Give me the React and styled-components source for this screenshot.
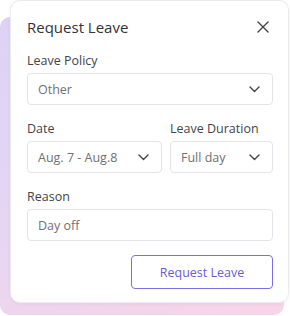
import styled, { createGlobalStyle } from "styled-components";

const GlobalStyle = createGlobalStyle`
  html, body {
    margin: 0;
    padding: 0;
    background: #ffffff;
  }
  body {
    font-family: "Open Sans", "Liberation Sans", sans-serif;
  }
  * {
    box-sizing: border-box;
  }
`;

const Stage = styled.div`
  display: grid;
  width: 290px;
  height: 316px;
`;

const Backdrop = styled.div`
  grid-area: 1 / 1;
  margin: 17px 6px 1px 0;
  border-radius: 10px;
  background: linear-gradient(160deg, #ddd2f6 0%, #e6d6f3 55%, #f8d5e6 100%);
`;

const Card = styled.div`
  grid-area: 1 / 1;
  margin: 0 1px 13px 10px;
  display: flex;
  flex-direction: column;
  padding: 16px 15px 0 16px;
  background: #ffffff;
  border: 1px solid #ececf0;
  border-radius: 10px;
  box-shadow: 0 1px 4px rgba(40, 30, 80, 0.05);
`;

const Header = styled.div`
  display: flex;
  align-items: center;
  justify-content: space-between;
  height: 20px;
  margin-bottom: 16px;
`;

const Title = styled.h2`
  margin: 0;
  font-size: 15px;
  font-weight: 500;
  color: #333338;
`;

const CloseButton = styled.button`
  display: flex;
  align-items: center;
  justify-content: center;
  width: 16px;
  height: 16px;
  margin-right: 2px;
  padding: 0;
  border: 0;
  background: none;
  color: #444;
`;

const Field = styled.div`
  display: flex;
  flex-direction: column;
  gap: 4px;
  margin-bottom: 16px;
`;

const Label = styled.label`
  font-size: 12.5px;
  line-height: 16px;
  color: #444448;
`;

const Row = styled.div`
  display: grid;
  grid-template-columns: 135px 1fr;
  gap: 8px;
`;

const Box = styled.div`
  display: flex;
  align-items: center;
  justify-content: space-between;
  height: 32px;
  padding: 0 12px 0 10px;
  border: 1px solid #e4e4ea;
  border-radius: 4px;
  font-size: 12.5px;
  color: #707076;
`;

const Footer = styled.div`
  display: flex;
  justify-content: flex-end;
  margin-top: -2px;
`;

const SubmitButton = styled.button`
  width: 142px;
  height: 34px;
  border: 1px solid #7c6ee6;
  border-radius: 4px;
  background: #ffffff;
  color: #6b5bd6;
  font-family: inherit;
  font-size: 12.5px;
  font-weight: 500;
`;

const Chevron = () => (
  <svg width="11" height="7" viewBox="0 0 11 7" fill="none">
    <path d="M1 1l4.5 4.5L10 1" stroke="#444" strokeWidth="1.4" strokeLinecap="round" strokeLinejoin="round" />
  </svg>
);

const Select = ({ value }) => (
  <Box>
    <span>{value}</span>
    <Chevron />
  </Box>
);

export default function App() {
  return (
    <>
      <GlobalStyle />
      <Stage>
        <Backdrop />
        <Card>
          <Header>
            <Title>Request Leave</Title>
            <CloseButton aria-label="Close">
              <svg width="12" height="12" viewBox="0 0 12 12">
                <path d="M1 1l10 10M11 1L1 11" stroke="#444" strokeWidth="1.4" strokeLinecap="round" />
              </svg>
            </CloseButton>
          </Header>
          <Field>
            <Label>Leave Policy</Label>
            <Select value="Other" />
          </Field>
          <Row>
            <Field>
              <Label>Date</Label>
              <Select value="Aug. 7 - Aug.8" />
            </Field>
            <Field>
              <Label>Leave Duration</Label>
              <Select value="Full day" />
            </Field>
          </Row>
          <Field>
            <Label>Reason</Label>
            <Box>Day off</Box>
          </Field>
          <Footer>
            <SubmitButton>Request Leave</SubmitButton>
          </Footer>
        </Card>
      </Stage>
    </>
  );
}
